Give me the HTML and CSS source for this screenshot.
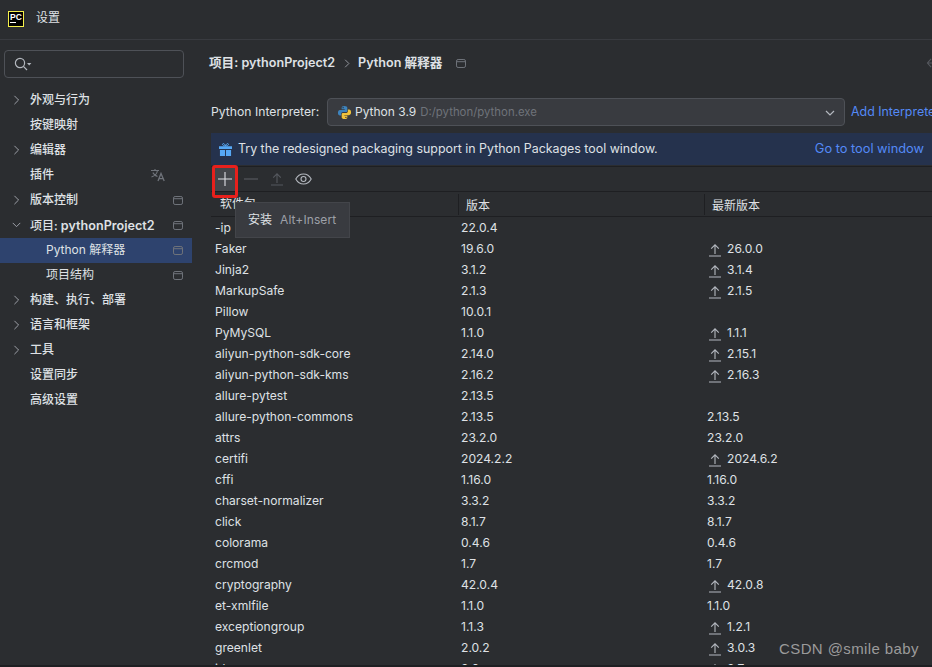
FILE: index.html
```html
<!DOCTYPE html>
<html lang="zh">
<head>
<meta charset="utf-8">
<title>设置</title>
<link rel="stylesheet" href="styles.css">
</head>
<body>
<svg class="defs" width="0" height="0">
  <symbol id="up" viewBox="0 0 12 14"><path d="M6 11V2M2.2 5.6 6 1.8l3.8 3.8M0 13h12" fill="none" stroke="currentColor" stroke-width="1.1"/></symbol>
  <symbol id="proj" viewBox="0 0 10 9"><rect x=".5" y=".5" width="9" height="8" rx="1.6" fill="none" stroke="currentColor"/><path d="M.5 2.7h9" stroke="currentColor"/></symbol>
  <symbol id="right" viewBox="0 0 8 12"><path d="M1.5 1 6.5 6l-5 5" fill="none" stroke="currentColor" stroke-width="1.2"/></symbol>
</svg>
<div class="app">
  <header class="titlebar">
    <div class="logo"><span class="logo-text">PC</span><span class="logo-bar"></span></div>
    <span class="title">设置</span>
  </header>
  <div class="body">
    <aside class="sidebar">
      <div class="search">
        <svg width="18" height="14" viewBox="0 0 18 14"><circle cx="6" cy="6" r="4.6" fill="none" stroke="#b4b8bf" stroke-width="1.2"/><path d="m9.4 9.4 3.6 3.6" stroke="#b4b8bf" stroke-width="1.2"/><path d="M13 6h4.4l-2.2 2.4z" fill="#b4b8bf"/></svg>
      </div>
      <nav class="tree">
        <div class="node top"><svg class="chev"><use href="#right"/></svg><span>外观与行为</span></div>
        <div class="node top"><span>按键映射</span></div>
        <div class="node top"><svg class="chev"><use href="#right"/></svg><span>编辑器</span></div>
        <div class="node top"><span>插件</span>
          <svg class="badge lang" viewBox="0 0 16 14"><path d="M1 2.5h8M5 1v1.5M7.5 2.5C7 5.5 4.5 8 1.5 9M2.8 4.6C4 6.6 5.6 7.8 7.5 8.5" fill="none" stroke="#6f737a" stroke-width="1.1"/><path d="m8 13 3-7.5L14.2 13M9.1 10.6h4.2" fill="none" stroke="#6f737a" stroke-width="1.3"/></svg>
        </div>
        <div class="node top"><svg class="chev"><use href="#right"/></svg><span>版本控制</span><svg class="badge"><use href="#proj"/></svg></div>
        <div class="node top"><svg class="chev" viewBox="0 0 12 12"><path d="M1.500 3.500 6 8l4.500-4.500" fill="none" stroke="currentColor" stroke-width="1.200"/></svg><span>项目: <span class="latin">pythonProject2</span></span><svg class="badge"><use href="#proj"/></svg></div>
        <div class="node sub selected"><span>Python 解释器</span><svg class="badge"><use href="#proj"/></svg></div>
        <div class="node sub"><span>项目结构</span><svg class="badge"><use href="#proj"/></svg></div>
        <div class="node top"><svg class="chev"><use href="#right"/></svg><span>构建、执行、部署</span></div>
        <div class="node top"><svg class="chev"><use href="#right"/></svg><span>语言和框架</span></div>
        <div class="node top"><svg class="chev"><use href="#right"/></svg><span>工具</span></div>
        <div class="node top"><span>设置同步</span></div>
        <div class="node top"><span>高级设置</span></div>
      </nav>
    </aside>
    <main class="content">
      <div class="crumbs">
        <b>项目: pythonProject2</b>
        <svg class="crumb-sep"><use href="#right"/></svg>
        <b>Python 解释器</b>
        <svg class="crumb-proj"><use href="#proj"/></svg>
        <svg class="back" viewBox="0 0 8 12"><path d="M6 1 1.5 6 6 11M1.5 6H8" fill="none" stroke="#55585e" stroke-width="1.3"/></svg>
      </div>
      <div class="interp">
        <label class="interp-label">Python Interpreter:</label>
        <div class="combo">
          <svg class="py" viewBox="0 0 16 16"><path d="M8 1C5.4 1 5 2 5 3v1.6h3.2v.6H3.2C1.8 5.2 1 6.4 1 8.2s.8 3 2.1 3H4.400V9.400C4.400 8.300 5.300 7.400 6.400 7.400h3.200c.9 0 1.400-.6 1.400-1.400V3c0-1.200-1.200-2-3-2z" fill="#3d83bd"/><path d="M8 15c2.600 0 3-1 3-2v-1.600H7.800v-.6h5c1.400 0 2.200-1.200 2.200-3s-.8-3-2.100-3h-1.300v1.800c0 1.100-.9 2-2 2H6.400c-.9 0-1.400.6-1.400 1.400v3c0 1.200 1.200 2 3 2z" fill="#f0c33c"/><circle cx="6.500" cy="2.800" r=".7" fill="#2b2d30"/><circle cx="9.500" cy="13.200" r=".7" fill="#2b2d30"/></svg>
          <span class="py-name">Python 3.9</span><span class="py-path">D:/python/python.exe</span>
          <svg class="combo-arrow" viewBox="0 0 10 6"><path d="m1 1 4 4 4-4" fill="none" stroke="#b4b8bf" stroke-width="1.200"/></svg>
        </div>
        <a class="link add">Add Interpreter</a>
      </div>
      <div class="banner">
        <svg class="gift" viewBox="0 0 14 14"><path d="M0 3.500h14v3H0zM1 7.500h5.500V14H1zM7.500 7.500H13V14H7.500z" fill="#56a8f5"/><path d="M7 3.200C5 3.200 3.500 2.500 3.800 1.200 4.300-.2 6.300.8 7 3.200 7.700.8 9.700-.2 10.200 1.200 10.500 2.500 9 3.200 7 3.200z" fill="none" stroke="#56a8f5"/></svg>
        <span>Try the redesigned packaging support in Python Packages tool window.</span>
        <a class="link go">Go to tool window</a>
      </div>
      <div class="toolbar">
        <div class="tool hovered"><svg width="14" height="14" viewBox="0 0 14 14"><path d="M7 0v14M0 7h14" stroke="#dfe1e5" stroke-width="1.100"/></svg></div>
        <div class="tool"><svg width="14" height="14" viewBox="0 0 14 14"><path d="M0 7h14" stroke="#55585e" stroke-width="1.200"/></svg></div>
        <div class="tool"><svg width="14" height="14" viewBox="0 0 12 14" color="#55585e"><use href="#up"/></svg></div>
        <div class="tool"><svg width="17" height="12" viewBox="0 0 17 12"><path d="M.8 6C2.500 2.800 5.200 1 8.500 1s6 1.800 7.700 5c-1.700 3.200-4.400 5-7.700 5S2.500 9.200.8 6z" fill="none" stroke="#b4b8bf" stroke-width="1.100"/><circle cx="8.500" cy="6" r="2.500" fill="none" stroke="#b4b8bf" stroke-width="1.100"/></svg></div>
      </div>
      <div class="thead">
        <div>软件包</div><div class="sep">版本</div><div class="sep">最新版本</div>
      </div>
      <div class="rows">
        <div class="row"><span>-ip</span><span>22.0.4</span><span></span></div>
        <div class="row"><span>Faker</span><span>19.6.0</span><span class="nv"><svg class="up"><use href="#up"/></svg>26.0.0</span></div>
        <div class="row"><span>Jinja2</span><span>3.1.2</span><span class="nv"><svg class="up"><use href="#up"/></svg>3.1.4</span></div>
        <div class="row"><span>MarkupSafe</span><span>2.1.3</span><span class="nv"><svg class="up"><use href="#up"/></svg>2.1.5</span></div>
        <div class="row"><span>Pillow</span><span>10.0.1</span><span></span></div>
        <div class="row"><span>PyMySQL</span><span>1.1.0</span><span class="nv"><svg class="up"><use href="#up"/></svg>1.1.1</span></div>
        <div class="row"><span>aliyun-python-sdk-core</span><span>2.14.0</span><span class="nv"><svg class="up"><use href="#up"/></svg>2.15.1</span></div>
        <div class="row"><span>aliyun-python-sdk-kms</span><span>2.16.2</span><span class="nv"><svg class="up"><use href="#up"/></svg>2.16.3</span></div>
        <div class="row"><span>allure-pytest</span><span>2.13.5</span><span></span></div>
        <div class="row"><span>allure-python-commons</span><span>2.13.5</span><span>2.13.5</span></div>
        <div class="row"><span>attrs</span><span>23.2.0</span><span>23.2.0</span></div>
        <div class="row"><span>certifi</span><span>2024.2.2</span><span class="nv"><svg class="up"><use href="#up"/></svg>2024.6.2</span></div>
        <div class="row"><span>cffi</span><span>1.16.0</span><span>1.16.0</span></div>
        <div class="row"><span>charset-normalizer</span><span>3.3.2</span><span>3.3.2</span></div>
        <div class="row"><span>click</span><span>8.1.7</span><span>8.1.7</span></div>
        <div class="row"><span>colorama</span><span>0.4.6</span><span>0.4.6</span></div>
        <div class="row"><span>crcmod</span><span>1.7</span><span>1.7</span></div>
        <div class="row"><span>cryptography</span><span>42.0.4</span><span class="nv"><svg class="up"><use href="#up"/></svg>42.0.8</span></div>
        <div class="row"><span>et-xmlfile</span><span>1.1.0</span><span>1.1.0</span></div>
        <div class="row"><span>exceptiongroup</span><span>1.1.3</span><span class="nv"><svg class="up"><use href="#up"/></svg>1.2.1</span></div>
        <div class="row"><span>greenlet</span><span>2.0.2</span><span class="nv"><svg class="up"><use href="#up"/></svg>3.0.3</span></div>
        <div class="row"><span>idna</span><span>3.6</span><span class="nv"><svg class="up"><use href="#up"/></svg>3.7</span></div>
      </div>
    </main>
  </div>
  <div class="footer-line"></div>
</div>
<div class="tooltip"><span>安装</span><span class="shortcut">Alt+Insert</span></div>
<div class="callout"></div>
<div class="watermark">CSDN @smile baby</div>
</body>
</html>
```
FILE: styles.css
```css
* { box-sizing: border-box; }
html, body { margin: 0; height: 100%; overflow: hidden; background: #2b2d30; }
body {
  position: relative;
  font: 12px/1.2 Inter, "Noto Sans CJK SC", sans-serif;
  color: #dfe1e5;
}
.defs { position: absolute; }
.app { display: flex; flex-direction: column; height: 667px; }
.titlebar {
  flex: none; height: 40px; display: flex; align-items: center; gap: 12px;
  padding: 0 0 2px 8px; border-bottom: 1px solid #393b40;
}
.logo {
  width: 16px; height: 16px; background: #000; border: 1px solid #f5f04a;
  display: flex; flex-direction: column; padding: 1px 1px; overflow: hidden;
}
.logo-text { font: 700 8.5px/8px "Liberation Sans", sans-serif; color: #fff; }
.logo-bar { width: 6px; height: 1px; margin-top: 1px; background: #fff; }
.title { font-size: 12px; }
.body { flex: 1; display: flex; min-height: 0; }
.sidebar { flex: none; width: 192px; padding-top: 10px; }
.search {
  width: 180px; height: 28px; margin-left: 4px; margin-bottom: 10px;
  border: 1px solid #4e5157; border-radius: 4px;
  display: flex; align-items: center; padding-left: 9px;
}
.node {
  position: relative; height: 25px; display: flex; align-items: center;
  padding-left: 30px; font-size: 12px;
}
.node.top { font-weight: 500; }
.node.sub { padding-left: 46px; }
.node.selected { background: #2e436e; }
.latin { font-size: 12.6px; font-weight: 600; }
.chev { position: absolute; left: 11px; top: 7px; width: 11px; height: 10px; color: #9da0a8; }
.badge { position: absolute; left: 173px; top: 8px; width: 10px; height: 9px; color: #6f737a; }
.badge.lang { left: 150px; top: 5px; width: 16px; height: 14px; }
.content { flex: 1; min-width: 0; padding-left: 19px; }
.crumbs {
  height: 20px; margin-top: 13px; margin-left: -2px; display: flex; align-items: center;
  font-size: 12.6px; position: relative;
}
.crumbs b { font-weight: 600; }
.crumb-sep { width: 6px; height: 9px; margin: 0 8px 0 9px; color: #9da0a8; }
.crumb-proj { width: 10px; height: 9px; margin-left: 14px; color: #6f737a; }
.back { position: absolute; right: -1px; top: 5px; width: 7px; height: 10px; }
.interp { margin-top: 25px; height: 28px; display: flex; align-items: center; white-space: nowrap; font-size: 12.2px; }
.interp-label { width: 116px; flex: none; padding-top: 1px; }
.combo {
  flex: none; width: 518px; height: 28px; display: flex; align-items: center;
  background: #393b40; border: 1px solid #4e5157; border-radius: 4px; padding: 1px 0 0 9px;
}
.py { width: 15px; height: 15px; margin-right: 3px; }
.py-name { margin-right: 4px; font-size: 12px; }
.py-path { font-size: 11.4px; color: #6f737a; }
.combo-arrow { width: 10px; height: 6px; margin-left: auto; margin-right: 9px; }
.link { color: #548af7; }
.add { margin-left: 6px; font-size: 12.4px; padding-top: 1px; }
.banner {
  margin-top: 7px; margin-bottom: 1px; height: 32px; background: #25324d; display: flex; align-items: center;
  padding-left: 8px; white-space: nowrap; font-size: 12.4px;
}
.gift { width: 13px; height: 13px; margin-right: 6px; }
.go { margin-left: auto; margin-right: 8px; font-size: 12.8px; }
.toolbar {
  height: 26px; display: flex; align-items: center; padding-left: 3px; gap: 4px;
  border-top: 1px solid #1e1f22; border-bottom: 1px solid #1e1f22;
}
.tool { width: 22px; height: 24px; display: flex; align-items: center; justify-content: center; }
.tool.hovered { background: #43454a; }
.thead {
  display: grid; grid-template-columns: 247px 246px 1fr; height: 25px; align-items: center;
  border-bottom: 1px solid #1e1f22; font-size: 12px;
}
.thead > div { padding: 1px 0 0 9px; }
.thead .sep { border-left: 1px solid #1e1f22; padding-left: 7px; height: 21px; line-height: 21px; }
.rows { height: 448px; overflow: hidden; padding-top: 1px; }
.row { display: grid; grid-template-columns: 246px 246px 1fr; height: 21px; align-items: center; font-size: 12.1px; }
.row > span { padding-left: 4px; white-space: nowrap; }
.nv { display: flex; align-items: center; }
.up { width: 12px; height: 14px; margin: 0 6px 0 2px; color: #b4b8bf; }
.footer-line { flex: none; height: 2px; background: #1e1f22; }
.tooltip {
  position: absolute; left: 235px; top: 202px; width: 115px; height: 36px;
  background: #393b40; border: 1px solid #43454a; display: flex; align-items: center;
  gap: 8px; padding: 1px 0 0 12px; font-size: 12px;
}
.shortcut { color: #9da0a8; letter-spacing: .1px; }
.callout {
  position: absolute; left: 212px; top: 165px; width: 26px; height: 33px;
  border: 3px solid #e8201c; border-radius: 3px;
}
.watermark {
  position: absolute; left: 779px; top: 640px; font: 15px/18px "Liberation Sans", sans-serif;
  color: #9b9b9b; letter-spacing: .4px;
}
```
